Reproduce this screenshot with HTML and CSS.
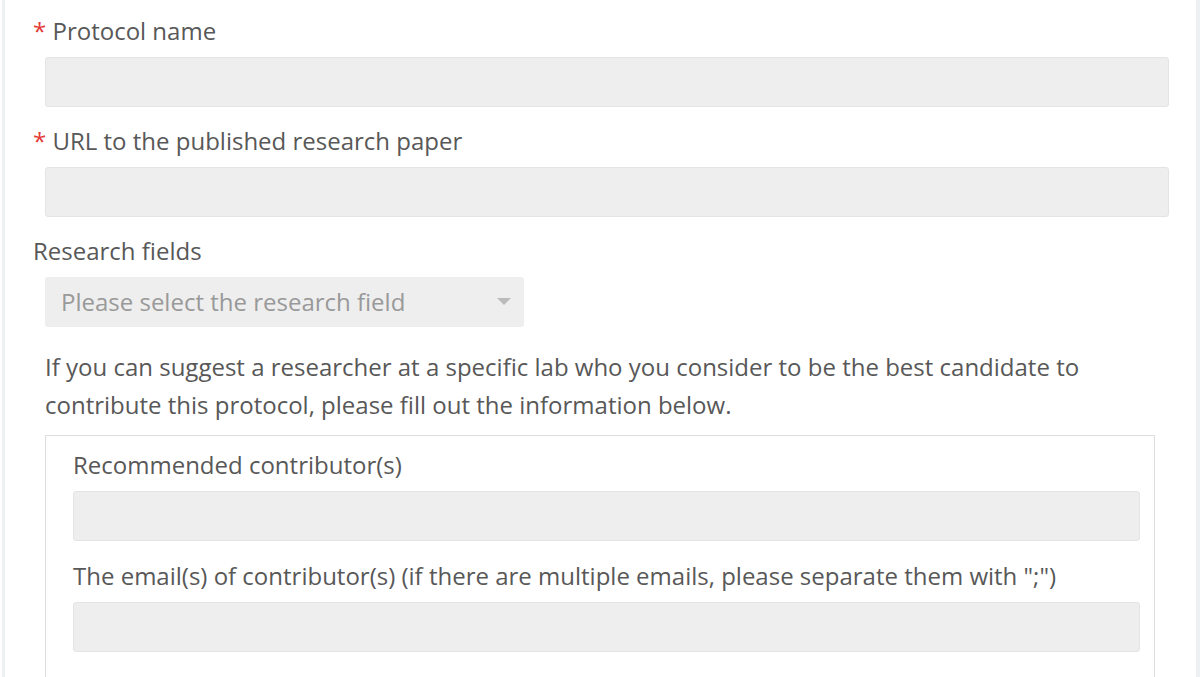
FILE: index.html
```html
<!DOCTYPE html>
<html lang="en">
<head>
  <meta charset="UTF-8">
  <title>Request a protocol</title>
  <link rel="stylesheet" href="styles.css">
</head>
<body>
  <div class="panel">
    <form class="protocol-form">
      <div class="field">
        <label><span class="req">*</span> Protocol name</label>
        <input type="text" class="control">
      </div>
      <div class="field">
        <label><span class="req">*</span> URL to the published research paper</label>
        <input type="text" class="control">
      </div>
      <div class="field">
        <label>Research fields</label>
        <div class="select">
          <span class="placeholder">Please select the research field</span>
          <span class="caret"></span>
        </div>
      </div>

      <p class="hint">If you can suggest a researcher at a specific lab who you consider to be the best candidate to contribute this protocol, please fill out the information below.</p>

      <div class="contrib-box">
        <div class="field">
          <label>Recommended contributor(s)</label>
          <input type="text" class="control">
        </div>
        <div class="field">
          <label>The email(s) of contributor(s) (if there are multiple emails, please separate them with ";")</label>
          <input type="text" class="control">
        </div>
      </div>
    </form>
  </div>
</body>
</html>
```

FILE: styles.css
```css
html, body { margin: 0; padding: 0; background: #fff; }
body { font-family: "Open Sans", "Liberation Sans", sans-serif; color: #585858; font-size: 24px; overflow: hidden; }

.panel {
  margin-left: 2px;
  width: 1198px;
  height: 677px;
  overflow: hidden;
  border-left: 3px solid #edf1f1;
  border-right: 4px solid #edf1f1;
  box-sizing: border-box;
}
.protocol-form { padding: 14px 27px 0 28px; }

.field { margin-bottom: 17px; }
.field label { display: block; line-height: 34px; margin-bottom: 9px; }
.req { color: #e53935; }

.control {
  display: block;
  box-sizing: border-box;
  width: calc(100% - 12px);
  margin-left: 12px;
  height: 50px;
  background: #eee;
  border: 1px solid #e4e4e4;
  border-radius: 3px;
  outline: none;
}

.select {
  position: relative;
  box-sizing: border-box;
  width: 479px;
  margin-left: 12px;
  height: 50px;
  background: #eee;
  border-radius: 3px;
  padding: 0 16px;
  line-height: 50px;
  color: #999;
}
.caret {
  position: absolute;
  right: 13px;
  top: 21px;
  border-left: 7px solid transparent;
  border-right: 7px solid transparent;
  border-top: 7px solid #bbb;
}

.hint { margin: 21px 0 11px 12px; line-height: 38px; }

.contrib-box {
  margin-left: 12px;
  margin-right: 14px;
  border: 1px solid #ddd;
  padding: 12px 14px 8px 27px;
}
.contrib-box .field + .field { margin-top: 18px; }
.contrib-box .control { width: 100%; margin-left: 0; }
```
